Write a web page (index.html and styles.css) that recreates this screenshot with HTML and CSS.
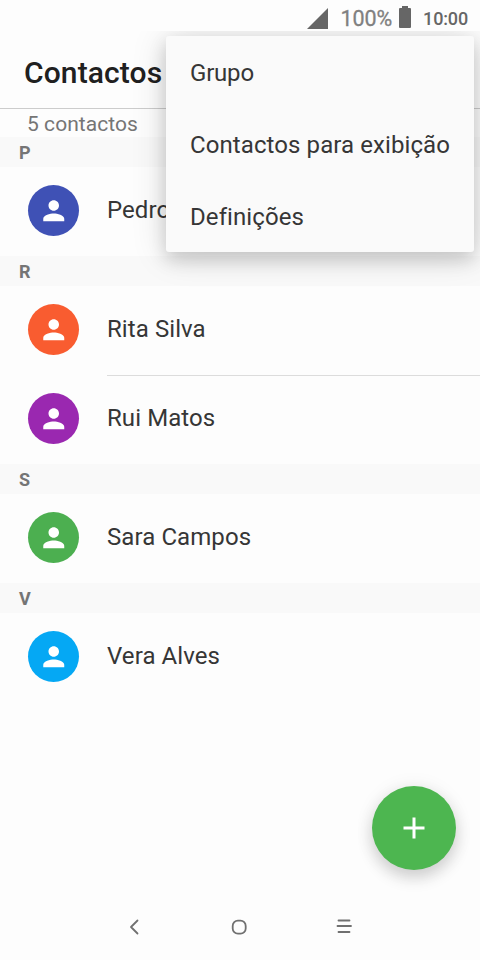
FILE: index.html
```html
<!DOCTYPE html>
<html lang="pt">
<head>
<meta charset="utf-8">
<title>Contactos</title>
<link rel="stylesheet" href="styles.css">
</head>
<body>
<svg class="defs" width="0" height="0"><symbol id="person" viewBox="0 0 24 24"><path d="M12 12c2.21 0 4-1.79 4-4s-1.79-4-4-4-4 1.79-4 4 1.79 4 4 4zm0 2c-2.67 0-8 1.34-8 4v2h16v-2c0-2.66-5.33-4-8-4z"/></symbol></svg>
<div class="screen">
  <div class="status">
    <svg class="signal" viewBox="0 0 21 21"><path d="M21 0V21H0Z"/></svg>
    <span class="percent">100%</span>
    <svg class="battery" viewBox="0 0 12 22"><path d="M3 0h6v2h2a1 1 0 0 1 1 1v18a1 1 0 0 1-1 1H1a1 1 0 0 1-1-1V3a1 1 0 0 1 1-1h2z"/></svg>
    <span class="time">10:00</span>
  </div>
  <main class="app">
    <header class="header"><h1>Contactos</h1></header>
    <p class="count">5 contactos</p>
    <h2 class="letter">P</h2>
    <div class="row"><div class="avatar indigo"><svg><use href="#person"/></svg></div><div class="name">Pedro</div></div>
    <h2 class="letter">R</h2>
    <div class="row"><div class="avatar orange"><svg><use href="#person"/></svg></div><div class="name">Rita Silva</div></div>
    <div class="row divided"><div class="avatar purple"><svg><use href="#person"/></svg></div><div class="name">Rui Matos</div></div>
    <h2 class="letter">S</h2>
    <div class="row"><div class="avatar green"><svg><use href="#person"/></svg></div><div class="name">Sara Campos</div></div>
    <h2 class="letter">V</h2>
    <div class="row"><div class="avatar blue"><svg><use href="#person"/></svg></div><div class="name">Vera Alves</div></div>
    <div class="menu">
      <div class="item short">Grupo</div>
      <div class="item">Contactos para exibição</div>
      <div class="item">Definições</div>
    </div>
    <div class="fab"><svg viewBox="0 0 22 22"><path d="M11 0.5v21M0.5 11h21"/></svg></div>
  </main>
  <nav class="nav">
    <svg viewBox="0 0 24 24"><path d="M15.500 5.500L9 12l6.500 6.500"/></svg>
    <svg viewBox="0 0 24 24"><rect x="5.700" y="5.700" width="13" height="13" rx="5.200"/></svg>
    <svg viewBox="0 0 24 24"><path d="M6.500 5.500h11M5.500 11h13.500M6.500 17h11"/></svg>
  </nav>
</div>
</body>
</html>
```

FILE: styles.css
```css
* { box-sizing: border-box; }
body { margin: 0; background: #fdfdfd; font-family: Roboto, sans-serif; color: #363636; }
h1, h2, p { margin: 0; }
.defs { display: block; }
.screen { width: 480px; height: 960px; display: flex; flex-direction: column; overflow: hidden; }
.status { height: 31px; flex: none; display: flex; align-items: flex-start; justify-content: flex-end; padding-right: 12px; color: #666; }
.status svg { fill: #666; flex: none; }
.signal { width: 21px; height: 21px; margin: 8px 12px 0 0; }
.percent { font-size: 21.500px; line-height: 24px; margin-top: 7px; color: #808080; -webkit-text-stroke: 0.3px #808080; letter-spacing: -0.1px; }
.battery { width: 12px; height: 22px; margin: 6px 12px 0 7px; }
.time { font-size: 18px; font-weight: 500; line-height: 22px; margin-top: 8px; letter-spacing: -0.15px; }
.app { position: relative; height: 861px; overflow: hidden; }
.header { height: 78px; padding: 22px 0 0 24px; border-bottom: 1px solid #ccc; }
h1 { font-size: 30px; line-height: 40px; font-weight: 500; color: #202020; letter-spacing: 0.12px; }
.count { height: 28px; padding-left: 27px; font-size: 21px; line-height: 30px; color: #757575; letter-spacing: 0.05px; }
.letter { height: 30px; padding-left: 19px; font-size: 18px; line-height: 31px; font-weight: 700; color: #757575; background: #f9f9f9; }
.row { height: 89px; display: flex; padding-left: 28px; }
.avatar { width: 51px; height: 51px; margin: 18px 28px 0 0; border-radius: 50%; display: flex; align-items: center; justify-content: center; flex: none; }
.avatar svg { width: 31.500px; height: 31.500px; fill: #fff; }
.indigo { background: #3f51b5; }
.orange { background: #f95c30; }
.purple { background: #9a28b0; }
.green { background: #4caf50; }
.blue { background: #05a8f4; }
.name { flex: 1; font-size: 24px; line-height: 84px; border-top: 1px solid transparent; letter-spacing: 0.08px; }
.divided .name { border-top-color: #dcdcdc; }
.menu { position: absolute; left: 166px; top: 5px; width: 308px; height: 216px; border-radius: 3px; background: #fafafa; box-shadow: 0 8px 18px rgba(0,0,0,.16), 0 2px 36px rgba(0,0,0,.14); }
.item { height: 72px; padding-left: 24px; font-size: 24px; line-height: 74px; white-space: nowrap; letter-spacing: 0.09px; }
.short { letter-spacing: -0.2px; }
.fab { position: absolute; left: 372px; top: 755px; width: 84px; height: 84px; border-radius: 50%; background: #4db650; display: flex; align-items: center; justify-content: center; box-shadow: 0 8px 16px rgba(0,0,0,.16), 0 1px 20px rgba(0,0,0,.07); }
.fab svg { width: 22px; height: 22px; stroke: #fff; stroke-width: 3; }
.nav { flex: 1; display: flex; justify-content: center; gap: 81px; padding: 23px 2px 0 0; }
.nav svg { width: 24px; height: 24px; fill: none; stroke: #707070; stroke-width: 1.800; stroke-linecap: round; stroke-linejoin: round; }
```
